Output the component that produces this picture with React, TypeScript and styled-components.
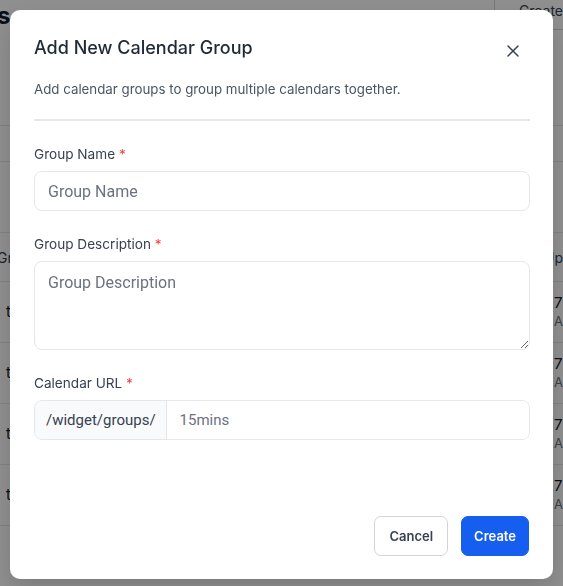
import * as React from 'react';
import styled, { createGlobalStyle } from 'styled-components';
import { X, User } from 'lucide-react';

const GlobalStyle = createGlobalStyle`
  html, body {
    margin: 0;
    padding: 0;
    background: #ffffff;
    font-family: Inter, "Noto Sans", sans-serif;
  }
  * {
    box-sizing: border-box;
  }
`;

// ---- page behind the dialog ----

const Page = styled.div`
  width: 100%;
  height: 100vh;
  overflow: hidden;
  background: #ffffff;
  color: #111827;
`;

const PageHeader = styled.div`
  display: flex;
  align-items: flex-start;
  justify-content: space-between;
  height: 126px;
  border-bottom: 1px solid #e5e7eb;
`;

const PageTitleBlock = styled.div`
  margin-left: -187px;
  padding-top: 2px;
  h1 {
    margin: 0;
    font-size: 24px;
    font-weight: 700;
    line-height: 28px;
    white-space: nowrap;
  }
  p {
    margin: 4px 0 0;
    font-size: 15px;
    color: #4b5563;
    white-space: nowrap;
  }
`;

const HeaderAction = styled.div`
  display: flex;
  align-items: flex-start;
  gap: 8px;
  width: 69px;
  height: 30px;
  padding: 0 0 0 16px;
  border-left: 1px solid #d1d5db;
  border-bottom: 1px solid #d1d5db;
  font-size: 14px;
  color: #374151;
  white-space: nowrap;
  overflow: hidden;
`;

const FilterBar = styled.div`
  height: 36px;
  border-bottom: 1px solid #e5e7eb;
`;

const Spacer = styled.div`
  height: 70px;
`;

const TableHeadRow = styled.div`
  display: flex;
  justify-content: space-between;
  align-items: center;
  height: 50px;
  border-top: 1px solid #e5e7eb;
  border-bottom: 1px solid #e5e7eb;
  font-size: 14px;
  color: #374151;
  span:first-child {
    margin-left: -3px;
  }
`;

const TableRow = styled.div`
  display: flex;
  justify-content: space-between;
  align-items: center;
  height: 61px;
  padding-left: 6px;
  border-bottom: 1px solid #e5e7eb;
  font-size: 15px;
  color: #111827;
`;

const Cell = styled.div`
  display: flex;
  flex-direction: column;
  line-height: 18px;
  small {
    color: #6b7280;
    font-size: 13px;
  }
`;

// ---- dialog ----

const Overlay = styled.div`
  position: fixed;
  inset: 0;
  background: rgba(0, 0, 0, 0.44);
  display: flex;
  padding: 10px 10px 7px 10px;
`;

const Dialog = styled.div`
  flex: 1;
  display: flex;
  flex-direction: column;
  background: #ffffff;
  border-radius: 10px;
  padding: 24px 23px 23px 24px;
  box-shadow: 0 10px 25px rgba(0, 0, 0, 0.15);
`;

const DialogHeader = styled.div`
  display: flex;
  align-items: flex-start;
  justify-content: space-between;
`;

const DialogTitle = styled.h2`
  margin: 0;
  font-size: 18px;
  line-height: 28px;
  font-weight: 500;
  color: #1f2937;
`;

const CloseButton = styled.button`
  display: flex;
  align-items: center;
  justify-content: center;
  width: 34px;
  height: 30px;
  margin-top: 2px;
  border: none;
  background: transparent;
  color: #374151;
  padding: 0;
  cursor: pointer;
`;

const DialogText = styled.p`
  margin: 13px 0 0;
  font-size: 13.3px;
  line-height: 20px;
  color: #4b5563;
`;

const Divider = styled.hr`
  margin: 20px 0 0;
  border: none;
  height: 2px;
  background: #e5e7eb;
`;

const Form = styled.form`
  display: flex;
  flex-direction: column;
  gap: 23px;
  margin-top: 23px;
`;

const Field = styled.div`
  display: flex;
  flex-direction: column;
  gap: 7px;
`;

const Label = styled.label`
  font-size: 13.6px;
  line-height: 20px;
  color: #374151;
  span {
    color: #ef4444;
  }
`;

const TextInput = styled.input`
  height: 40px;
  width: 100%;
  border: 1px solid #e5e7eb;
  border-radius: 8px;
  padding: 0 13px;
  font-family: Roboto, "Liberation Sans", sans-serif;
  font-size: 16px;
  color: #1f2937;
  outline: none;
  &::placeholder {
    color: #6b7280;
  }
`;

const TextArea = styled.textarea`
  height: 89px;
  width: 100%;
  border: 1px solid #e5e7eb;
  border-radius: 8px;
  padding: 10px 13px;
  font-family: Roboto, "Liberation Sans", sans-serif;
  font-size: 16px;
  line-height: 22px;
  color: #1f2937;
  outline: none;
  resize: vertical;
  &::placeholder {
    color: #6b7280;
  }
`;

const InputGroup = styled.div`
  display: flex;
  height: 40px;
  border: 1px solid #e5e7eb;
  border-radius: 8px;
  overflow: hidden;
`;

const Prefix = styled.span`
  display: flex;
  align-items: center;
  padding: 0 10px 0 11px;
  background: #f9fafb;
  border-right: 1px solid #e5e7eb;
  font-family: Roboto, "Liberation Sans", sans-serif;
  font-size: 15px;
  color: #374151;
`;

const GroupInput = styled.input`
  flex: 1;
  border: none;
  padding: 0 13px;
  font-family: Roboto, "Liberation Sans", sans-serif;
  font-size: 15px;
  color: #6b7280;
  outline: none;
`;

const Footer = styled.div`
  margin-top: auto;
  display: flex;
  justify-content: flex-end;
  gap: 13px;
  padding-right: 1px;
`;

const Button = styled.button<{ $primary?: boolean }>`
  height: 40px;
  padding: ${(p) => (p.$primary ? '0 12px' : '0 14px')};
  border-radius: 7px;
  font-family: Inter, "Noto Sans", sans-serif;
  font-size: 13px;
  font-weight: 600;
  cursor: pointer;
  border: 1px solid ${(p) => (p.$primary ? '#155eef' : '#d1d5db')};
  background: ${(p) => (p.$primary ? '#155eef' : '#ffffff')};
  color: ${(p) => (p.$primary ? '#ffffff' : '#374151')};
`;

const rows = [1, 2, 3, 4];

export default function App() {
  return (
    <>
      <GlobalStyle />
      <Page>
        <PageHeader>
          <PageTitleBlock>
            <h1>Calendar Groups</h1>
            <p>Manage calendar groups</p>
          </PageTitleBlock>
          <HeaderAction>
            <User size={14} style={{ marginTop: -6 }} />
            <span style={{ marginTop: 2 }}>Create Group</span>
          </HeaderAction>
        </PageHeader>
        <FilterBar />
        <Spacer />
        <TableHeadRow>
          <span>Group</span>
          <span>Up</span>
        </TableHeadRow>
        {rows.map((r) => (
          <TableRow key={r}>
            <Cell>test</Cell>
            <Cell>
              <span>7</span>
              <small>A</small>
            </Cell>
          </TableRow>
        ))}
      </Page>

      <Overlay>
        <Dialog>
          <DialogHeader>
            <DialogTitle>Add New Calendar Group</DialogTitle>
            <CloseButton type="button" aria-label="Close">
              <X size={20} strokeWidth={1.75} />
            </CloseButton>
          </DialogHeader>
          <DialogText>Add calendar groups to group multiple calendars together.</DialogText>
          <Divider />
          <Form onSubmit={(e) => e.preventDefault()}>
            <Field>
              <Label>
                Group Name <span>*</span>
              </Label>
              <TextInput placeholder="Group Name" />
            </Field>
            <Field>
              <Label>
                Group Description <span>*</span>
              </Label>
              <TextArea placeholder="Group Description" />
            </Field>
            <Field>
              <Label>
                Calendar URL <span>*</span>
              </Label>
              <InputGroup>
                <Prefix>/widget/groups/</Prefix>
                <GroupInput defaultValue="15mins" />
              </InputGroup>
            </Field>
          </Form>
          <Footer>
            <Button type="button">Cancel</Button>
            <Button type="button" $primary>
              Create
            </Button>
          </Footer>
        </Dialog>
      </Overlay>
    </>
  );
}
